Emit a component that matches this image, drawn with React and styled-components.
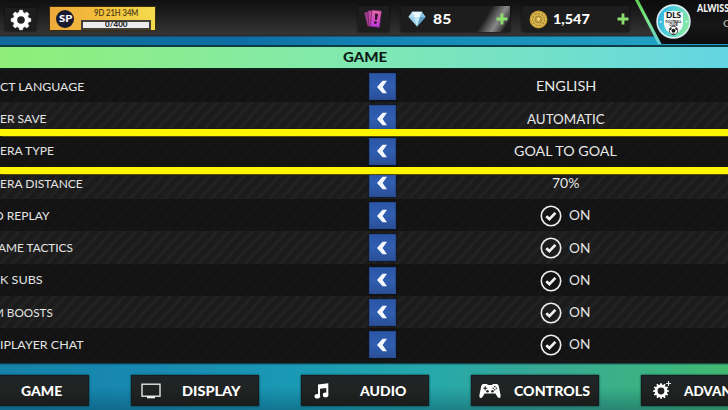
import React, { useLayoutEffect, useRef } from "react";
import styled, { createGlobalStyle } from "styled-components";

const Global = createGlobalStyle`
  * { box-sizing: border-box; }
  html, body { margin: 0; padding: 0; overflow: hidden; background: #111; }
  svg { display: block; flex: none; }
`;

const Screen = styled.div`
  width: 728px;
  height: 410px;
  overflow: hidden;
  display: flex;
  flex-direction: column;
  background: #0d1819;
  font-family: Lato, "Liberation Sans", sans-serif;
  color: #f2f2f2;
`;

/* ---------- text that fills a given width ---------- */
const FitBox = styled.span`
  display: block;
  flex: none;
  width: ${(p) => p.$w}px;
  height: ${(p) => p.$size * 1.2}px;
  line-height: ${(p) => p.$size * 1.2}px;
  font-size: ${(p) => p.$size}px;
  font-weight: ${(p) => p.$weight};
  color: ${(p) => p.$color};
  white-space: nowrap;
`;
const FitInner = styled.span`
  display: inline-block;
  transform-origin: 0 50%;
  -webkit-text-stroke: ${(p) => p.$stroke}px currentColor;
`;
function Fit({ w, size = 13, weight = 400, color = "inherit", stroke = 0, children }) {
  const ref = useRef(null);
  useLayoutEffect(() => {
    const el = ref.current;
    el.style.transform = `scaleX(${w / el.offsetWidth})`;
  }, [w, children]);
  return (
    <FitBox $w={w} $size={size} $weight={weight} $color={color}>
      <FitInner ref={ref} $stroke={stroke}>{children}</FitInner>
    </FitBox>
  );
}

/* ---------- header ---------- */
const Header = styled.header`
  flex: none;
  height: 45px;
  display: flex;
  align-items: flex-start;
  background:
    linear-gradient(180deg, #101010 0, #1b1b1b 12px, #343434 34px, #262b2e 36px, transparent 37px),
    linear-gradient(90deg, #10699a 0, #0e6ea3 240px, #1487b7 400px, #209fc2 640px);
`;
const Tile = styled.div`
  height: ${(p) => p.$h}px;
  width: ${(p) => p.$w}px;
  margin: ${(p) => p.$top}px 0 0 ${(p) => p.$left}px;
  flex: none;
  display: flex;
  align-items: center;
  background: #1d1d1d;
  box-shadow: 0 0 2px #0b0b0b;
`;
const IconTile = styled(Tile)`
  justify-content: center;
`;
const GemTile = styled(Tile)`
  padding-left: 7px;
  background: linear-gradient(122deg, transparent 73%, #5d5d5d 80%, #888 85%, #4a4a4a 91%, transparent 94%), #1d1d1d;
`;
const CoinTile = styled(Tile)`
  padding-left: 7px;
`;
const Gap = styled.span`
  flex: none;
  width: ${(p) => p.$w}px;
`;
const Season = styled.div`
  width: 107px;
  height: 25px;
  margin: 6px 0 0 13px;
  flex: none;
  display: flex;
  padding: 1px 4px 0 6px;
  gap: 7px;
  border: 1px solid #3b2a0b;
  background: linear-gradient(90deg, #eda93a 0, #f3bd3c 45%, #f4dc4d 100%);
`;
const SeasonInfo = styled.div`
  display: flex;
  flex-direction: column;
  align-items: center;
  width: 70px;
`;
const Progress = styled.div`
  width: 70px;
  height: 10px;
  margin-top: 1.7px;
  border: 2px solid #424039;
  background: #ececec;
  display: flex;
  align-items: center;
  justify-content: center;
`;
const SpBadge = styled.div`
  width: 18px;
  height: 18px;
  margin-top: 2px;
  border-radius: 50%;
  background: #191a30;
  display: flex;
  align-items: center;
  justify-content: center;
`;
const ProfileEdge = styled.div`
  flex: none;
  width: 94px;
  height: 44px;
  margin-left: 6px;
  clip-path: polygon(0 0, 100% 0, 100% 100%, 23px 100%);
  background: linear-gradient(180deg, #5fcf52 0, #7de58a 45%, #5fd0dc 100%);
`;
const Profile = styled.div`
  width: 100%;
  height: 100%;
  padding: 4px 0 0 21px;
  display: flex;
  gap: 6px;
  clip-path: polygon(3.5px 0, 100% 0, 100% 100%, 26.5px 100%);
  background: linear-gradient(180deg, #0c0c0c, #171717 60%, #0c0c0c);
`;
const ProfileText = styled.div`
  display: flex;
  flex-direction: column;
  gap: 2px;
  margin-top: -2px;
`;
const Club = styled.div`
  padding-left: 26px;
`;

/* ---------- panel ---------- */
const TitleBar = styled.div`
  flex: none;
  height: 23px;
  padding-left: 2px;
  border-top: 2px solid #0c3c43;
  display: flex;
  align-items: center;
  justify-content: center;
  background: linear-gradient(90deg, #8fee78 0, #89ec94 180px, #7ee8b4 380px, #72dfcb 560px, #63d5e3 728px);
`;
const Panel = styled.main`
  flex: none;
  height: 295px;
  padding-top: 2px;
  background: linear-gradient(180deg, #0e2920 0, #161616 2px);
  position: relative;
`;
const Row = styled.div`
  height: 32.25px;
  display: flex;
  align-items: center;
  background: ${(p) =>
    p.$striped
      ? "repeating-linear-gradient(133deg, #1b1b1b 0, #1c1c1c 4px, #222 5.5px, #222 7px, #1b1b1b 8.5px)"
      : "repeating-linear-gradient(133deg, #131313 0, #131313 4px, #151515 5.5px, #151515 7px, #131313 8.5px)"};
`;
const Label = styled.div`
  width: 369px;
  padding-top: 2px;
  flex: none;
`;
const Arrow = styled.div`
  width: 27px;
  height: 27px;
  margin-top: 1px;
  padding-right: 2px;
  flex: none;
  display: flex;
  align-items: center;
  justify-content: center;
  background: linear-gradient(180deg, #2b56a8, #305eb0 50%, #2b4f98);
  border: 1px solid #264a90;
  box-shadow: 0 0 2px #0a1530;
`;
const Value = styled.div`
  width: 339px;
  padding: 2px 0 0 ${(p) => (p.$toggle ? 5 : 7)}px;
  display: flex;
  align-items: center;
  justify-content: center;
  gap: 7px;
`;
const Marker = styled.div`
  position: absolute;
  left: 0;
  right: 0;
  top: ${(p) => p.$top}px;
  height: 7px;
  background: #fff500;
  box-shadow: 0 0 1px 0.5px #4e4c08;
`;

/* ---------- footer ---------- */
const Footer = styled.footer`
  flex: none;
  height: 47px;
  display: flex;
  gap: 42px;
  padding-top: 12px;
  background:
    linear-gradient(180deg, #0b2a30 0, transparent 2px, transparent 50%, #03304a55 100%),
    linear-gradient(97deg, #1583aa 0, #1889b1 150px, #1a9ab4 300px, #25a8aa 430px, #38a994 540px, #3bb580 660px, #42b96e 728px);
`;
const TabButton = styled.div`
  width: 128px;
  height: 31px;
  flex: none;
  display: flex;
  align-items: center;
  justify-content: ${(p) => (p.$first ? "flex-end" : "flex-start")};
  padding: 1px ${(p) => (p.$first ? 26 : 0)}px 0 ${(p) => p.$pad || 0}px;
  margin-left: ${(p) => (p.$first ? -39 : 0)}px;
  border: 1px solid #151d1f;
  background: linear-gradient(180deg, #202527, #1f2322 50%, #1b1c1c);
  box-shadow: 0 0 2px #08252e;
`;

/* ---------- drawings ---------- */
const gearPath = (n, ro, ri, c) => {
  const pts = [];
  for (let i = 0; i < n; i++) {
    const a = (i * 2 * Math.PI) / n;
    const s = Math.PI / n;
    [[-0.62, ri], [-0.38, ro], [0.38, ro], [0.62, ri]].forEach(([k, r]) =>
      pts.push(`${(c + r * Math.sin(a + k * s)).toFixed(2)} ${(c - r * Math.cos(a + k * s)).toFixed(2)}`)
    );
  }
  return `M${pts.join("L")}Z`;
};
const GearIcon = () => (
  <svg width="22" height="22" viewBox="0 0 22 22">
    <path d={gearPath(8, 9.8, 7.7, 11)} fill="#fff" stroke="#fff" strokeWidth="0.8" strokeLinejoin="round" />
    <circle cx="11" cy="11" r="3.8" fill="#222" />
  </svg>
);
const CardsIcon = () => (
  <svg width="19" height="20" viewBox="0 0 19 20">
    <defs>
      <linearGradient id="card" x1="0" y1="0" x2="0" y2="1">
        <stop offset="0" stopColor="#e56ba0" />
        <stop offset="1" stopColor="#bd36dc" />
      </linearGradient>
    </defs>
    <rect x="2" y="2.5" width="8" height="14" fill="#9b3d8c" transform="rotate(-14 6 10)" />
    <rect x="4.5" y="1.5" width="9" height="16" fill="#c8479e" stroke="#4d1c54" strokeWidth="0.6" transform="rotate(-4 9 10)" />
    <rect x="7" y="1.5" width="9.5" height="16.5" fill="url(#card)" stroke="#5b2063" strokeWidth="0.6" transform="rotate(7 12 10)" />
    <path d="M11 4.5l3.2.4-1.5 6.2h-1.6z" fill="#32102f" />
    <circle cx="11.4" cy="13.6" r="1.4" fill="#32102f" />
  </svg>
);
const GemIcon = () => (
  <svg width="18" height="16" viewBox="0 0 18 16">
    <path d="M4.3.8h9.4L17.5 6 9 15.6.5 6z" fill="#9bd0ec" />
    <path d="M4.3.8h9.4L12 6H6z" fill="#e8f7fd" />
    <path d="M6 6h6L9 15.6z" fill="#c4e7f6" />
    <path d="M.5 6H6L4.3.8z" fill="#b5def2" />
    <path d="M12 6h5.5L13.7.8z" fill="#8cc5e6" />
    <path d="M12 6h5.5L9 15.6z" fill="#5d9ec9" />
    <path d="M4.3.8L9 6l4.7-5.2" fill="none" stroke="#fff" strokeWidth="0.6" />
  </svg>
);
const CoinIcon = () => (
  <svg width="19" height="19" viewBox="0 0 19 19">
    <circle cx="9.5" cy="9.5" r="9" fill="#c39a31" />
    <circle cx="9.5" cy="9.5" r="7.6" fill="#e0bd55" />
    <circle cx="9.5" cy="9.5" r="5.9" fill="none" stroke="#9c7925" strokeWidth="1.1" strokeDasharray="2.2 1.1" />
    <circle cx="9.5" cy="9.5" r="3.6" fill="#cfa740" stroke="#8f6c20" strokeWidth="0.7" />
    <path d="M9.5 6.8l2.3 1.7-.9 2.7H8.1l-.9-2.7z" fill="#edd37a" stroke="#937022" strokeWidth="0.5" />
  </svg>
);
const PlusIcon = () => (
  <svg width="12" height="12" viewBox="0 0 12 12">
    <path d="M6 .5v11M.5 6h11" stroke="#8ddf6f" strokeWidth="2.8" />
  </svg>
);
const ClubLogo = () => (
  <svg width="35" height="35" viewBox="0 0 35 35">
    <defs>
      <linearGradient id="club" x1="0" y1="0" x2="1" y2="0.3">
        <stop offset="0" stopColor="#28a9e0" />
        <stop offset="0.5" stopColor="#4fcfd9" />
        <stop offset="1" stopColor="#84e7a4" />
      </linearGradient>
    </defs>
    <circle cx="17.5" cy="17.5" r="16.4" fill="url(#club)" stroke="#d8eef0" strokeWidth="1.6" />
    <path d="M8 8.5Q17.5 5 27 8.5V20q0 7-9.5 11Q8 27 8 20z" fill="#f5f8f8" />
    <text x="17.5" y="14" textAnchor="middle" fontFamily="Lato, sans-serif" fontWeight="900" fontSize="7" textLength="15" lengthAdjust="spacingAndGlyphs" fill="#111">DLS</text>
    <text x="17.5" y="18.5" textAnchor="middle" fontFamily="Lato, sans-serif" fontWeight="900" fontSize="3.8" textLength="16" lengthAdjust="spacingAndGlyphs" fill="#222">FOOTBALL</text>
    <text x="17.5" y="22" textAnchor="middle" fontFamily="Lato, sans-serif" fontWeight="900" fontSize="3.4" textLength="8" lengthAdjust="spacingAndGlyphs" fill="#222">CLUB</text>
    <circle cx="17.5" cy="26.5" r="4.2" fill="#fff" stroke="#222" strokeWidth="0.8" />
    <path d="M17.5 24.5l2.2 1.6-.9 2.5h-2.6l-.9-2.5zM13.6 25l1.5-1.5.7 1.3-1.6 1.5zM21.4 25l-1.5-1.5-.7 1.3 1.6 1.5zM16 30.5h3l-.7-1.1h-1.6z" fill="#111" />
    <circle cx="4.7" cy="17.7" r="1" fill="#dff6fb" />
    <circle cx="30.3" cy="17.7" r="1" fill="#dff6fb" />
  </svg>
);
const ChevronIcon = () => (
  <svg width="12" height="14" viewBox="0 0 12 14">
    <path d="M6.6.8H11L6.600 7 11 13.200H6.600L1 7z" fill="#f5f8fc" />
  </svg>
);
const CheckIcon = () => (
  <svg width="22" height="22" viewBox="0 0 22 22">
    <circle cx="11" cy="11" r="9.7" fill="none" stroke="#ededed" strokeWidth="1.6" />
    <path d="M6.3 11.2l3.1 3 6-6.400" fill="none" stroke="#f2f2f2" strokeWidth="2.7" />
  </svg>
);
const ScreenIcon = () => (
  <svg width="20" height="16" viewBox="0 0 20 16">
    <rect x="1" y="1.2" width="18" height="12" fill="none" stroke="#e6e6e6" strokeWidth="1.4" />
    <path d="M6 14.300h8" stroke="#f4f4f4" strokeWidth="2" />
  </svg>
);
const NoteIcon = () => (
  <svg width="15" height="16" viewBox="0 0 15 16">
    <path d="M4 1.600L14.300.300v11.200h-2V5L6 5.800v7.400H4z" fill="#fff" />
    <ellipse cx="3.3" cy="13.2" rx="2.8" ry="2.3" fill="#fff" />
    <ellipse cx="11.6" cy="11.9" rx="2.8" ry="2.3" fill="#fff" />
  </svg>
);
const PadIcon = () => (
  <svg width="22" height="16" viewBox="0 0 22 16">
    <path d="M4 1h4l1 1h4l1-1h4q1.3.2 1.800 2.200l1.800 9q.4 2.400-1.200 2.800-1.200.2-2-1.200l-2-3.300H5.600l-2 3.300Q2.800 15.200 1.600 15 0 14.600.4 12.200l1.800-9Q2.700 1.200 4 1z" fill="#fff" />
    <path d="M6.2 3.200v4M4.200 5.200h4" stroke="#222" strokeWidth="1.1" />
    <circle cx="15.8" cy="3.6" r="0.8" fill="#222" />
    <circle cx="15.8" cy="6.8" r="0.8" fill="#222" />
    <circle cx="14.2" cy="5.2" r="0.8" fill="#222" />
    <circle cx="17.4" cy="5.2" r="0.8" fill="#222" />
    <circle cx="8.5" cy="8.2" r="1.3" fill="#222" />
    <circle cx="13.5" cy="8.2" r="1.3" fill="#222" />
  </svg>
);
const AdvancedIcon = () => (
  <svg width="20" height="20" viewBox="0 0 20 20">
    <g transform="translate(0 2)">
      <path d={gearPath(12, 7.900, 6.300, 8)} fill="#fff" />
      <circle cx="8" cy="8" r="3.4" fill="#222" />
    </g>
    <path d="M15.500 0v5M13 2.500h5" stroke="#e8e8e8" strokeWidth="1.1" />
  </svg>
);

const rows = [
  { label: "CT LANGUAGE", lw: 84, value: "ENGLISH", vw: 60 },
  { label: "ER SAVE", lw: 47, value: "AUTOMATIC", vw: 78 },
  { label: "ERA TYPE", lw: 54, value: "GOAL TO GOAL", vw: 103 },
  { label: "ERA DISTANCE", lw: 83, value: "70%", vw: 28 },
  { label: "O REPLAY", lw: 56, shift: -6, on: true },
  { label: "AME TACTICS", lw: 75, shift: -2, on: true },
  { label: "K SUBS", lw: 43, on: true },
  { label: "M BOOSTS", lw: 60, shift: -7, on: true },
  { label: "IPLAYER CHAT", lw: 84, on: true },
];
const Shift = styled.div`
  margin-left: ${(p) => p.$x}px;
`;

export default function App() {
  return (
    <Screen>
      <Global />
      <Header>
        <IconTile $w={31} $h={23} $top={8} $left={5}><GearIcon /></IconTile>
        <Season>
          <SpBadge><Fit w={13} size={9.5} weight={900} color="#fff">SP</Fit></SpBadge>
          <SeasonInfo>
            <Fit w={44} size={8.6} color="#4a3513" stroke={0.15}>9D 21H 34M</Fit>
            <Progress><Fit w={22} size={6.6} weight={900} color="#222">0/400</Fit></Progress>
          </SeasonInfo>
        </Season>
        <IconTile $w={31} $h={26} $top={6} $left={202}><CardsIcon /></IconTile>
        <GemTile $w={109} $h={26} $top={6} $left={12}>
          <GemIcon /><Gap $w={7} />
          <Fit w={18} size={14} weight={900} color="#fff">85</Fit>
          <Gap $w={45} /><PlusIcon />
        </GemTile>
        <CoinTile $w={107} $h={26} $top={6} $left={12}>
          <CoinIcon /><Gap $w={5} />
          <Fit w={37} size={14} weight={900} color="#fff">1,547</Fit>
          <Gap $w={27} /><PlusIcon />
        </CoinTile>
        <ProfileEdge>
          <Profile>
            <ClubLogo />
            <ProfileText>
              <Fit w={32} size={10.5} weight={900} color="#f2f2f2">ALWISS</Fit>
              <Club><Fit w={8} size={10} color="#bbb">C</Fit></Club>
            </ProfileText>
          </Profile>
        </ProfileEdge>
      </Header>
      <TitleBar><Fit w={44} size={14} weight={900} color="#0d1a17">GAME</Fit></TitleBar>
      <Panel>
        {rows.map((r, i) => (
          <Row key={r.label} $striped={i % 2 === 1}>
            <Label>
              <Shift $x={r.shift || 0}><Fit w={r.lw} size={12.3} color="#e4e4e4">{r.label}</Fit></Shift>
            </Label>
            <Arrow><ChevronIcon /></Arrow>
            <Value $toggle={r.on}>
              {r.on ? (
                <><CheckIcon /><Fit w={21} color="#e4e4e4">ON</Fit></>
              ) : (
                <Fit w={r.vw} color="#e8e8e8">{r.value}</Fit>
              )}
            </Value>
          </Row>
        ))}
        <Marker $top={61} />
        <Marker $top={99} />
      </Panel>
      <Footer>
        <TabButton $first><Fit w={41} size={14} weight={900} color="#fff">GAME</Fit></TabButton>
        <TabButton $pad={9}><ScreenIcon /><Gap $w={21} /><Fit w={59} size={14} weight={900} color="#fff">DISPLAY</Fit></TabButton>
        <TabButton $pad={12}><NoteIcon /><Gap $w={31} /><Fit w={46} size={14} weight={900} color="#fff">AUDIO</Fit></TabButton>
        <TabButton $pad={7}><PadIcon /><Gap $w={13} /><Fit w={76} size={14} weight={900} color="#fff">CONTROLS</Fit></TabButton>
        <TabButton $pad={11}><AdvancedIcon /><Gap $w={11} /><Fit w={75} size={14} weight={900} color="#fff">ADVANCED</Fit></TabButton>
      </Footer>
    </Screen>
  );
}
